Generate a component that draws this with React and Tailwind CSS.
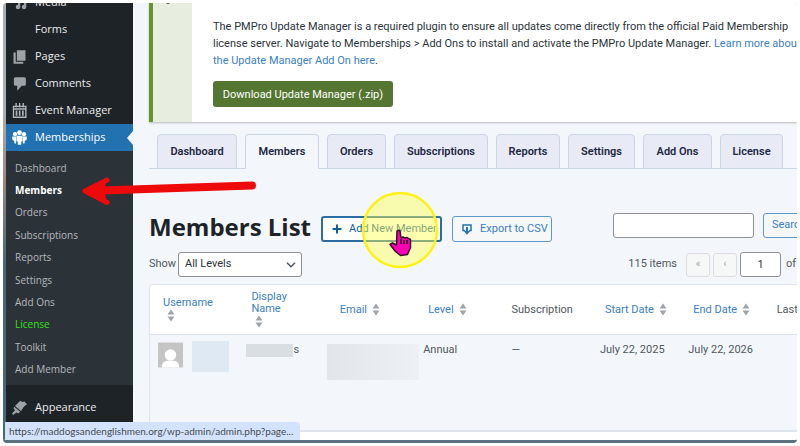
import React from 'react';

const menuItems = [
  { label: 'Media', icon: 'media' },
  { label: 'Forms', icon: 'forms' },
  { label: 'Pages', icon: 'pages' },
  { label: 'Comments', icon: 'comments' },
  { label: 'Event Manager', icon: 'calendar' },
];

const subItems = ['Dashboard', 'Members', 'Orders', 'Subscriptions', 'Reports', 'Settings', 'Add Ons', 'License', 'Toolkit', 'Add Member'];

const tabs = [
  { label: 'Dashboard', width: 'w-[80px]' },
  { label: 'Members', width: 'w-[74px]' },
  { label: 'Orders', width: 'w-[59px]' },
  { label: 'Subscriptions', width: 'w-[94px]' },
  { label: 'Reports', width: 'w-[64px]' },
  { label: 'Settings', width: 'w-[67px]' },
  { label: 'Add Ons', width: 'w-[69px]' },
  { label: 'License', width: 'w-[63px]' },
];

const MenuIcon = ({ name }) => {
  const cls = 'h-[15px] w-[15px] shrink-0';
  switch (name) {
    case 'media':
      return (
        <svg viewBox="0 0 20 20" className={cls} fill="#9ca2a7">
          <path d="M8 3h11v13a3 3 0 1 1-3-3V7h-5v9a3 3 0 1 1-3-3z" />
        </svg>
      );
    case 'pages':
      return (
        <svg viewBox="0 0 20 20" className={cls} fill="#9ca2a7">
          <path d="M6.500 1.500h11.500v14H6.500z" />
          <path d="M2 4.500h3v12.500h10v2.500H2z" />
        </svg>
      );
    case 'comments':
      return (
        <svg viewBox="0 0 20 20" className={cls} fill="#9ca2a7">
          <path d="M4.500 1.500h12q2 0 2 2V11q0 2-2 2H13l-6 6.500V13H4.500q-2 0-2-2V3.500q0-2 2-2z" />
        </svg>
      );
    case 'calendar':
      return (
        <svg viewBox="0 0 20 20" className={cls} fill="none" stroke="#b3b8bc" strokeWidth="1.800">
          <path d="M2 4.500h16.500V19H2zM2 8h16.500M5.500 0v6M10.200 0v6M15 0v6" />
          <path d="M6 10v7M10.200 10v7M14.500 10v7" strokeWidth="2.200" />
        </svg>
      );
    case 'appearance':
      return (
        <svg viewBox="0 0 20 20" className={cls} fill="#9ca2a7">
          <path d="M11 1l2.500 1.500 3-.500 3.500 3.500-4 3-4 6-8-6.500z" />
          <path d="M3 9l8 6.500L8.500 18 6 16.500 1.500 20 0 18l4-4.500L2 11z" />
        </svg>
      );
    case 'groups':
      return (
        <svg viewBox="0 0 20 20" className={cls} fill="#fff">
          <circle cx="10" cy="3.500" r="3.200" />
          <circle cx="4" cy="5.500" r="2.800" />
          <circle cx="16" cy="5.500" r="2.800" />
          <path d="M6 7.500h8v7l-1.700 1v4.200H7.700v-4.200L6 14.500zM.300 8.800h5.200V18H3.300L3 14.500l-2.700-2zM19.700 8.800h-5.200V18h2.200l.300-3.500 2.700-2z" />
        </svg>
      );
    default:
      return <span className={cls} />;
  }
};

const SortArrows = () => (
  <svg viewBox="0 0 8 13" className="inline-block h-[13px] w-2 shrink-0" fill="#a0a4a8">
    <path d="M4 .500l3.500 5h-7zM4 12.500L.500 7.500h7z" />
  </svg>
);

const Sidebar = () => (
  <aside className="w-[127px] shrink-0 overflow-hidden bg-[#1d2327] font-['Open_Sans',sans-serif]">
    <nav className="-mt-[14px] text-[11px] text-[#eaebec]">
      {menuItems.map((item) => (
        <a key={item.label} href="#" className="flex h-[27px] items-center gap-2 pl-[6px]">
          <MenuIcon name={item.icon} />
          {item.label}
        </a>
      ))}
      <a href="#" className="relative flex h-[27px] items-center gap-2 bg-[#2271b1] pl-[6px] text-white">
        <MenuIcon name="groups" />
        Memberships
        <span className="absolute top-[7px] right-0 border-y-[7px] border-r-[6px] border-y-transparent border-r-[#f3f7fb]" />
      </a>
      <div className="grid h-[234px] auto-rows-fr items-center bg-[#2c3338] pt-[6px] pb-[4px] pl-[9px] text-[10px] text-[#b4b8bc]">
        {subItems.map((label) => (
          <a
            key={label}
            href="#"
            className={label === 'Members' ? 'font-bold text-white' : label === 'License' ? 'text-[#33e010]' : ''}
          >
            {label}
          </a>
        ))}
      </div>
      <a href="#" className="mt-[9px] flex h-[27px] items-center gap-2 pl-[6px]">
        <MenuIcon name="appearance" />
        Appearance
      </a>
    </nav>
  </aside>
);

const Notice = () => (
  <section className="flex h-[119px] border-l-4 border-[#68932b] bg-white shadow-[0_1px_2px_rgba(0,0,0,0.250)]">
    <div className="flex w-[39px] shrink-0 justify-center overflow-hidden bg-[#e7eddf]">
      <span className="-mt-[1px] ml-[-10px] h-[2px] w-1 rounded-b bg-[#555]" />
    </div>
    <div className="pt-[15px] pl-[21px] text-[11px] leading-[17px] whitespace-nowrap text-[#2c3338]">
      <p>
        The PMPro Update Manager is a required plugin to ensure all updates come directly from the official Paid Membership
        <br />
        license server. Navigate to Memberships &gt; Add Ons to install and activate the PMPro Update Manager.{' '}
        <a href="#" className="text-[#3b80bd]">
          Learn more abou
          <br />
          the Update Manager Add On here
        </a>
        .
      </p>
      <button className="mt-3 h-[26px] w-[180px] rounded-[3px] bg-[#557630] text-[11px] text-white">
        Download Update Manager (.zip)
      </button>
    </div>
  </section>
);

const Tabs = () => (
  <nav className="mt-3 flex gap-2 border-b border-[#c9d4e4] pl-2">
    {tabs.map((tab) => (
      <a
        key={tab.label}
        href="#"
        className={`${tab.width} -mb-px flex h-[35px] shrink-0 items-center justify-center rounded-t-[4px] border border-[#c9d4e4] pt-[2px] text-[11px] font-semibold text-[#1d2740] ${
          tab.label === 'Members' ? 'border-b-[#f3f7fb] bg-[#f3f7fb]' : 'bg-[#e8ebf5]'
        }`}
      >
        {tab.label}
      </a>
    ))}
  </nav>
);

const TitleBar = () => (
  <div className="mt-[44px] flex h-[28px] text-[11px] whitespace-nowrap">
    <h1 className="w-[172px] shrink-0 font-['Open_Sans',sans-serif] text-[24px] leading-[28px] font-bold text-[#1d2327]">Members List</h1>
    <button className="mt-[3px] flex h-[26px] w-[121px] shrink-0 items-center rounded-[3px] border-2 border-[#2b6ca3] bg-white pl-[9px] text-[#135e96]">
      <svg viewBox="0 0 10 10" className="mr-[7px] h-[10px] w-[10px]" stroke="#135e96" strokeWidth="2">
        <path d="M5 .500v9M.500 5h9" />
      </svg>
      Add New Member
    </button>
    <button className="mt-[3px] ml-[10px] flex h-[26px] w-[100px] shrink-0 items-center rounded-[3px] border border-[#5d97c9] bg-[#f6f7f7] pl-[9px] text-[#3b80bd]">
      <svg viewBox="0 0 10 11" className="mr-2 h-[11px] w-[10px]" fill="none" stroke="#2271b1" strokeWidth="1.500">
        <path d="M3 6.500H1V1h8v5.500H7" />
        <path d="M5 3v5" strokeWidth="2" />
        <path d="M1.800 7h6.400L5 10.800z" fill="#2271b1" stroke="none" />
      </svg>
      Export to CSV
    </button>
    <input aria-label="Search members" className="ml-[61px] h-[25px] w-[141px] shrink-0 rounded-[3px] border border-[#8c8f94] bg-white px-2" />
    <button className="ml-[9px] h-[25px] shrink-0 rounded-[3px] border border-[#5d97c9] bg-[#f6f7f7] px-2 text-[#3b80bd]">
      Search
    </button>
  </div>
);

const Filters = () => (
  <div className="mt-[11px] flex items-center text-[11px] text-[#50575e]">
    <label htmlFor="level" className="w-[29px] shrink-0 pb-px">Show</label>
    <div className="relative shrink-0">
      <select id="level" className="h-[25px] w-[124px] appearance-none rounded-[3px] border border-[#8c8f94] bg-white pl-[6px] text-[#2c3338]">
        <option>All Levels</option>
      </select>
      <svg viewBox="0 0 10 6" className="pointer-events-none absolute top-[10px] right-[6px] h-[6px] w-[10px]" fill="none" stroke="#50575e" strokeWidth="1.500">
        <path d="M1 .700l4 4 4-4" />
      </svg>
    </div>
    <span className="w-[384px] shrink-0 pr-[9px] text-right">115 items</span>
    <button disabled className="h-6 w-6 shrink-0 rounded-[3px] border border-[#dcdcde] bg-[#f6f7f7] text-[#a7aaad]">«</button>
    <button disabled className="ml-[3px] h-6 w-6 shrink-0 rounded-[3px] border border-[#dcdcde] bg-[#f6f7f7] text-[#a7aaad]">‹</button>
    <input aria-label="Current page" defaultValue="1" className="ml-[3px] h-[25px] w-[41px] shrink-0 rounded-[3px] border border-[#8c8f94] bg-white text-center text-[#2c3338]" />
    <span className="ml-[5px]">of</span>
  </div>
);

const headLink = 'text-[#3b80bd]';

const MembersTable = () => (
  <table className="mt-[7px] w-[709px] table-fixed border-separate border-spacing-0 rounded-tl-[4px] border border-[#dfe5ec] text-left text-[11px] leading-[12px] whitespace-nowrap text-[#50575e]">
    <thead>
      <tr className="h-[50px] bg-white [&>th]:border-b [&>th]:border-[#dfe5ec] [&>th]:p-0 [&>th]:pl-[13px] [&>th]:font-normal">
        <th className="rounded-tl-[4px]">
          <a href="#" className={headLink}>Username<span className="block pl-[4px]"><SortArrows /></span></a>
        </th>
        <th>
          <a href="#" className={headLink}>Display<br />Name<span className="block pl-[4px]"><SortArrows /></span></a>
        </th>
        <th><a href="#" className={`${headLink} flex items-center gap-[5px]`}>Email <SortArrows /></a></th>
        <th><a href="#" className={`${headLink} flex items-center gap-[5px]`}>Level <SortArrows /></a></th>
        <th><div className="-ml-[5px]">Subscription</div></th>
        <th><a href="#" className={`${headLink} flex items-center gap-[5px]`}>Start Date <SortArrows /></a></th>
        <th><a href="#" className={`${headLink} flex items-center gap-[5px]`}>End Date <SortArrows /></a></th>
        <th><div className="-ml-[5px]">Last</div></th>
      </tr>
    </thead>
    <tbody>
      <tr className="h-[96px] align-top [&>td]:border-b [&>td]:border-[#dfe5ec] [&>td]:p-0 [&>td]:pt-[9px] [&>td]:pl-[8px]">
        <td>
          <div className="-mt-[2px] flex gap-[9px]">
            <svg viewBox="0 0 26 26" className="h-[26px] w-[25px]">
              <path fill="#c4c4c4" d="M0 0h26v26H0z" />
              <circle cx="13" cy="13" r="6" fill="#fff" />
              <path fill="#fff" d="M4 26q0-7 6-7h6q6 0 6 7z" />
            </svg>
            <span className="-mt-px h-[31px] w-[37px] bg-[#dfe9f3]" />
          </div>
        </td>
        <td><div className="flex"><span className="h-[13px] w-[47px] bg-[#d9dee2]" />s</div></td>
        <td><div className="-ml-[8px] h-[36px] w-[92px] bg-linear-to-r from-[#e2e5e9] to-[#edf1f5]" /></td>
        <td>Annual</td>
        <td>—</td>
        <td>July 22, 2025</td>
        <td>July 22, 2026</td>
        <td></td>
      </tr>
    </tbody>
  </table>
);

const App = () => (
  <div className="h-screen overflow-hidden bg-white p-[3px] font-['Roboto','Noto_Sans',sans-serif]">
    <div className="relative flex h-full overflow-hidden rounded-[4px] border-b-[3px] border-[#5a7280] bg-[#f3f7fb]">
      <div className="w-[3px] shrink-0 bg-linear-to-b from-[#a9aeb2] from-25% via-[#9a8880] via-40% to-[#4a6674] to-60%" />
      <Sidebar />
      <main className="min-w-0 flex-1 overflow-hidden pl-4">
        <Notice />
        <Tabs />
        <TitleBar />
        <Filters />
        <MembersTable />
        <div className="h-5 bg-white" />
      </main>
      <div className="absolute bottom-0 left-[2px] h-[18px] w-[295px] rounded-tr-[3px] bg-[#d3e3fd] pl-1 font-['Lato',sans-serif] text-[10px] leading-[18px] whitespace-nowrap text-[#474b50]">
        https://maddogsandenglishmen.org/wp-admin/admin.php?page...
      </div>
    </div>

    {/* pointer callouts drawn over the page */}
    <svg viewBox="0 0 176 32" className="pointer-events-none absolute top-[175px] left-[81px] h-8 w-[176px]" fill="none" stroke="#ee0a0a" strokeLinecap="round" strokeLinejoin="round">
      <path d="M171 10.500L20 15.500" strokeWidth="8" />
      <path d="M3 16L26 5l-3 10 3 12z" fill="#ee0a0a" stroke="none" />
      <path d="M4 16L26 5M4 16l22 11.500" strokeWidth="5" />
    </svg>
    <svg viewBox="0 0 80 80" className="pointer-events-none absolute top-[190px] left-[360px] h-20 w-20">
      <circle cx="40" cy="40" r="37" fill="#ffff50" fillOpacity="0.450" stroke="#fbf316" strokeWidth="2.500" />
      <path d="M37 41q2-1.500 3 0l1 7 2-1 2 1 2-.500 1.500 1 2 1v8l-3 7-7 1-5-4-5.500-7 2.500-1.500 4 2z" fill="#ff00b4" stroke="#31102c" strokeWidth="1.500" strokeLinejoin="round" />
      <path d="M41 49v5M44 50v4M47 50v4" stroke="#31102c" strokeWidth="1.600" />
    </svg>
  </div>
);

export default App;
